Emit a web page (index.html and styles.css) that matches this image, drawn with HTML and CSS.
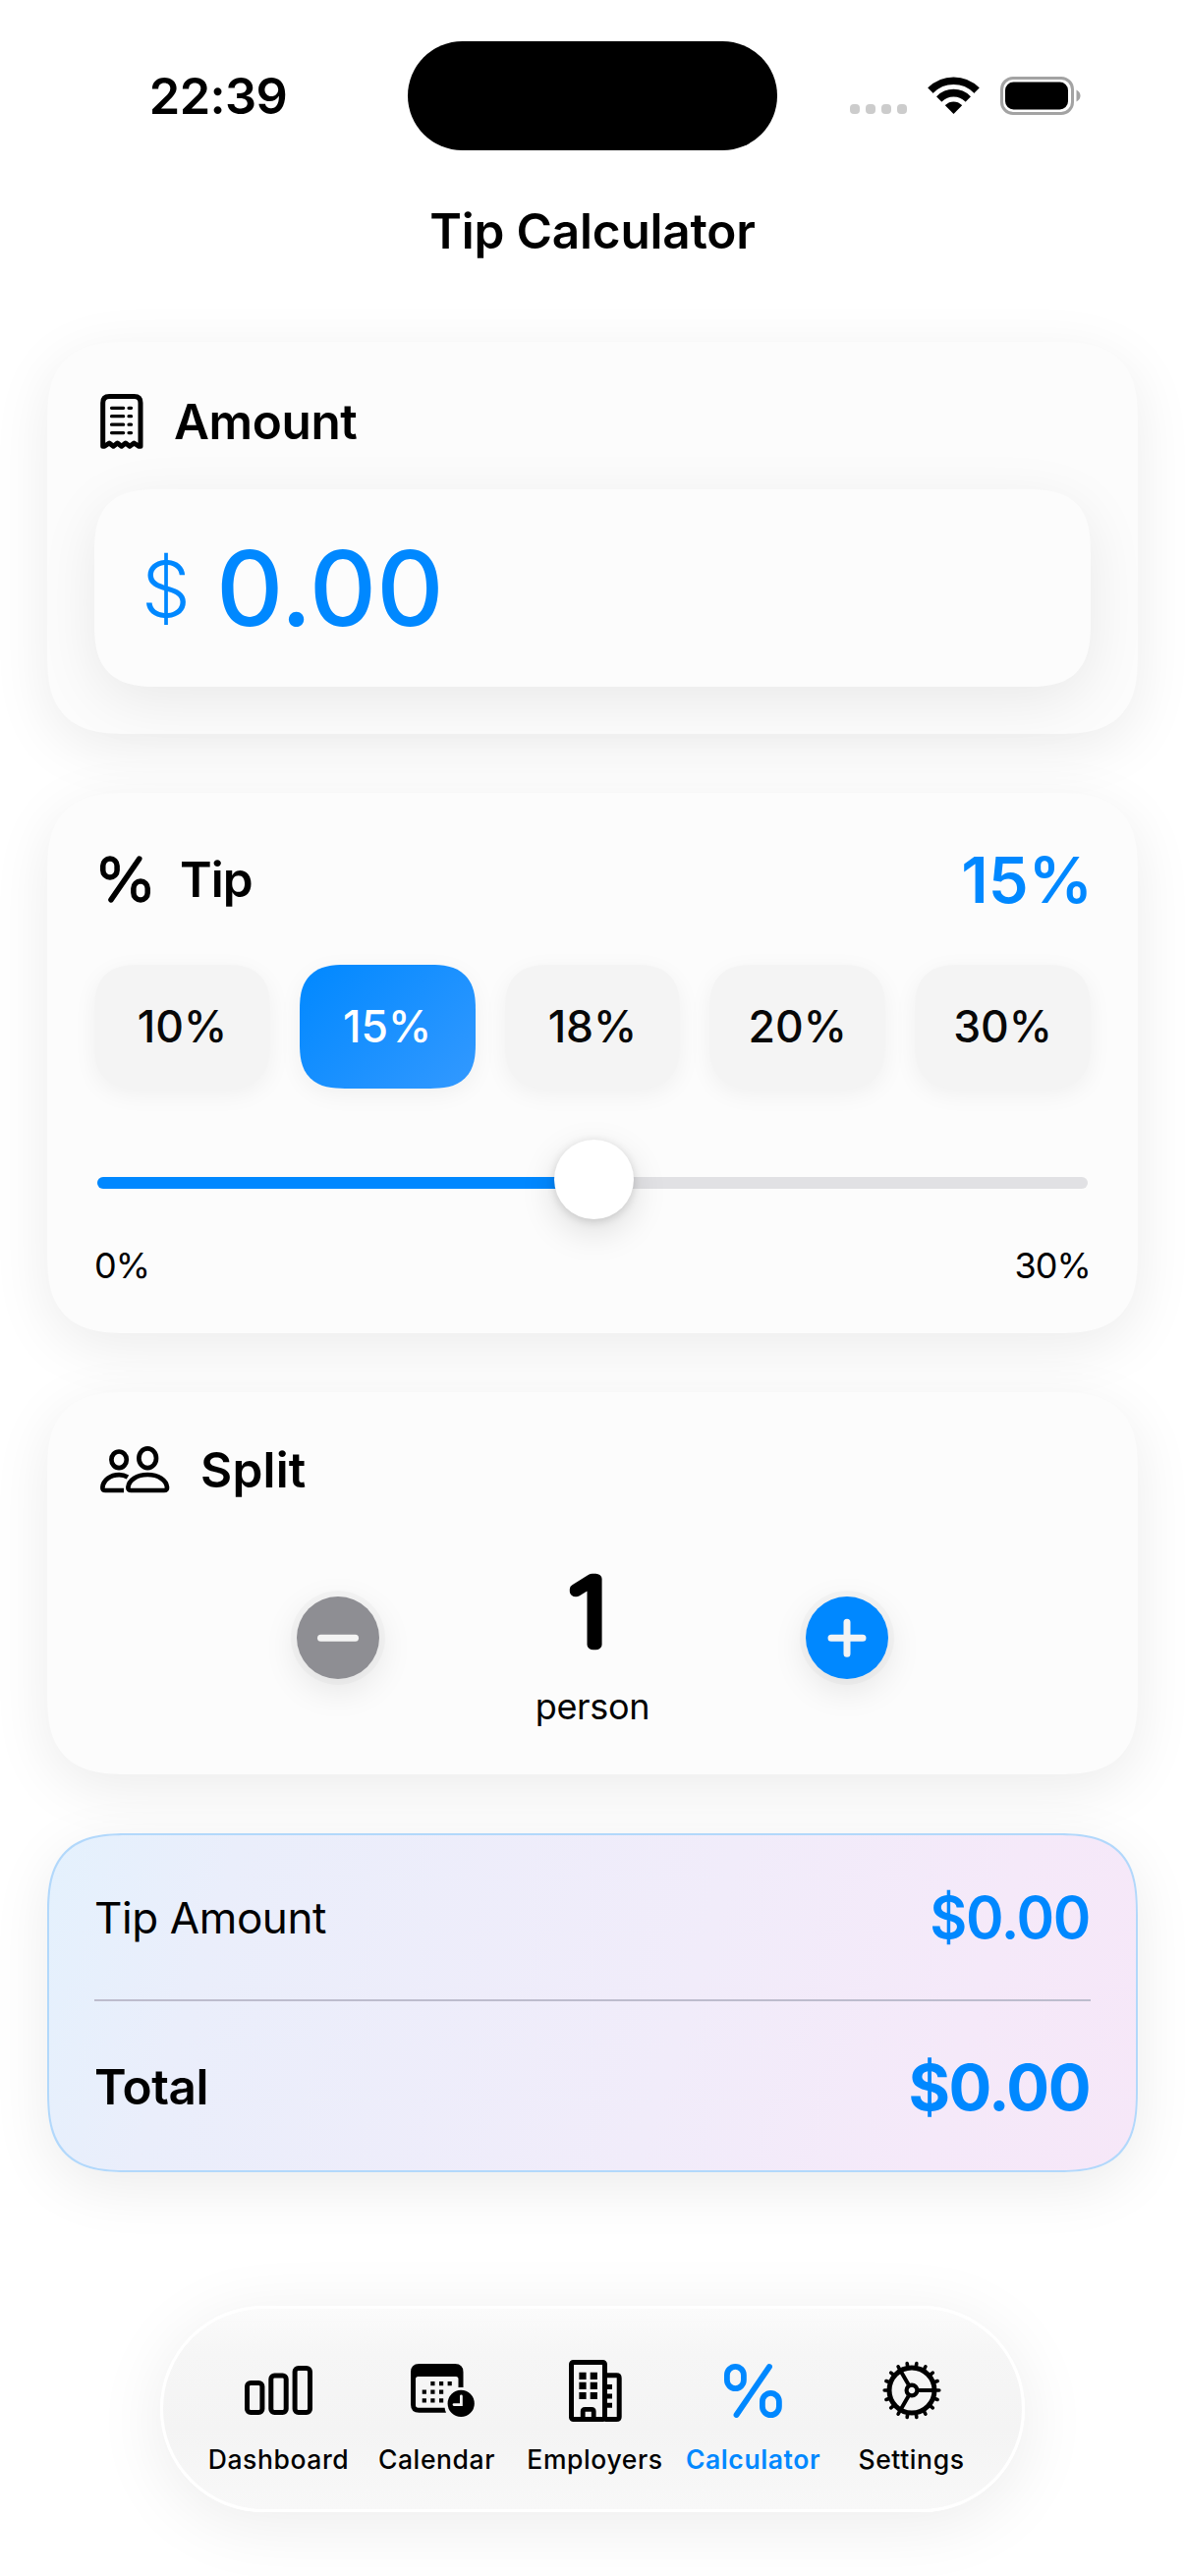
FILE: index.html
```html
<!DOCTYPE html>
<html lang="en">
<head>
<meta charset="utf-8">
<title>Tip Calculator</title>
<link rel="stylesheet" href="styles.css">
</head>
<body>
<div class="screen">
  <header class="status">
    <div class="time">22:39</div>
    <div class="island"></div>
    <div class="indicators">
      <span class="dots"><i></i><i></i><i></i><i></i></span>
      <svg class="wifi" width="51" height="38" viewBox="0 0 51 38">
        <defs><clipPath id="wedge"><path d="M25.5 38L-12 0V-10H63V0Z"/></clipPath></defs>
        <g clip-path="url(#wedge)" fill="none" stroke="#000">
          <circle cx="25.5" cy="37" r="32.8" stroke-width="7.6"/>
          <circle cx="25.5" cy="37" r="20.4" stroke-width="7.6"/>
          <circle cx="25.5" cy="37" r="5.8" stroke-width="11.6"/>
        </g>
      </svg>
      <svg class="battery" width="82" height="39" viewBox="0 0 82 39">
        <rect x="1.5" y="1.5" width="72" height="36" rx="11.5" fill="none" stroke="#a3a3a3" stroke-width="3"/>
        <rect x="5" y="5.5" width="64" height="28" rx="8.5"/>
        <path d="M77.5 13.5q4 2.2 4 6t-4 6z" fill="#a3a3a3"/>
      </svg>
    </div>
  </header>
  <h1 class="title">Tip Calculator</h1>

  <main class="cards">
    <section class="card card-amount">
      <div class="head">
        <svg class="receipt" width="44" height="56" viewBox="0 0 44 56" fill="none" stroke="#000" stroke-linecap="round" stroke-linejoin="round">
          <path stroke-width="5" d="M2.7 53.3V9Q2.7 2.6 9.2 2.6H34.6Q41 2.6 41 9V53.3H39.5L34.4 50L30 53.2L25.8 50L21.7 53.2L17.5 50L13.4 53.2L9.2 50L4.3 53.3Z"/>
          <path stroke-width="3.2" d="M11.5 14.3H23.7M29 14.3H31.6M11.5 22.7H23.7M29 22.7H31.6M11.5 31.2H23.7M29 31.2H31.6M11.5 39.6H23.7M29 39.6H31.6"/>
        </svg>
        <h2 class="label t-amount">Amount</h2>
      </div>
      <div class="field"><span class="currency">$</span><span class="value">0.00</span></div>
    </section>

    <section class="card card-tip">
      <div class="head">
        <svg class="pct" width="51" height="48" viewBox="0 0 59 55" fill="none" stroke="#000" stroke-width="6.4">
          <rect x="3.2" y="3.2" width="16.6" height="22" rx="8.3"/><rect x="39.2" y="29.8" width="16.6" height="22" rx="8.3"/>
          <path stroke-linecap="round" d="M46 3.3L12.7 51.7"/>
        </svg>
        <h2 class="label t-tip">Tip</h2>
        <span class="percent">15%</span>
      </div>
      <div class="chips">
        <button class="chip">10%</button><button class="chip on">15%</button><button class="chip">18%</button><button class="chip">20%</button><button class="chip">30%</button>
      </div>
      <div class="slider"><div class="track"><div class="fill"></div></div><div class="thumb"></div></div>
      <div class="range"><span>0%</span><span>30%</span></div>
    </section>

    <section class="card card-split">
      <div class="head">
        <svg class="people" width="71" height="48" viewBox="0 0 71 48" fill="none" stroke="#000" stroke-width="4.7" stroke-linecap="butt">
          <ellipse cx="19.1" cy="13.8" rx="7.7" ry="8.3"/><ellipse cx="48.2" cy="12.2" rx="8.8" ry="9.9"/>
          <path d="M31.4 45H65Q68.3 45 68 41.8C67.3 34.6 59.2 29 48.2 29S29.1 34.6 28.4 41.8Q28.1 45 31.4 45Z"/>
          <path d="M24 45H5.3Q2.1 45 2.4 42C3 35 10 29.2 19.3 29.2Q24 29.2 28 31.6"/>
        </svg>
        <h2 class="label t-split">Split</h2>
      </div>
      <div class="stepper">
        <button class="round minus"><svg width="84" height="84" viewBox="0 0 84 84"><path d="M24.5 42.3H59.5" stroke="#f4f4f4" stroke-width="7" stroke-linecap="round"/></svg></button>
        <div class="count">
          <svg class="number" width="60" height="90" viewBox="0 0 60 90"><text transform="translate(25.5 78.5) scale(1.2 1)" text-anchor="middle">1</text></svg>
          <span class="unit">person</span>
        </div>
        <button class="round plus"><svg width="84" height="84" viewBox="0 0 84 84"><path d="M26 42.3H58M42 26.3V58.3" stroke="#f4f4f4" stroke-width="7" stroke-linecap="round"/></svg></button>
      </div>
    </section>

    <section class="card card-total">
      <div class="row row-tip"><span class="row-name">Tip Amount</span><span class="sum">$0.00</span></div>
      <div class="row row-total"><span class="row-name">Total</span><span class="sum">$0.00</span></div>
    </section>
  </main>

  <nav class="tabs">
    <a class="tab"><span class="ico"><svg width="69" height="50" viewBox="0 0 69 50" fill="none" stroke="#000" stroke-width="5"><rect x="2.5" y="17.5" width="15.4" height="30" rx="3.6"/><rect x="26.8" y="10" width="15.4" height="37.5" rx="3.6"/><rect x="51.1" y="2.5" width="15.4" height="45" rx="3.6"/></svg></span><span class="name">Dashboard</span></a>
    <a class="tab"><span class="ico"><svg class="cal" width="65" height="54" viewBox="0 0 65 54">
      <path d="M0 8.5Q0 0 8.5 0H45Q53.5 0 53.5 8.5V24H48.5V15.5Q48.5 13 46 13H7.5Q5 13 5 15.5V42Q5 44.7 7.7 44.7H34.6Q34.8 47.5 36 49.7H8.5Q0 49.7 0 41.2Z"/>
      <path d="M20.3 18h4.2v4.2h-4.2zM29 18h4.2v4.2H29zM37.6 18h4.2v4.2h-4.2zM11.7 26.6h4.2v4.2h-4.2zM20.3 26.6h4.2v4.2h-4.2zM29 26.6h4.2v4.2H29zM11.7 35.2h4.2v4.2h-4.2zM20.3 35.2h4.2v4.2h-4.2zM29 35.2h4.2v4.2H29z"/>
      <circle cx="51.2" cy="40.4" r="13.6"/><path d="M51.4 33V41.6H44" fill="none" stroke="#f5f5f5" stroke-width="2.8" stroke-linecap="round"/></svg></span><span class="name">Calendar</span></a>
    <a class="tab"><span class="ico"><svg width="54" height="63" viewBox="0 0 54 63" fill="none" stroke="#000" stroke-width="5">
      <rect x="2.5" y="2.5" width="34" height="58" rx="2"/><path d="M36.5 15.8H48.5Q51.2 15.8 51.2 18.5V58Q51.2 60.5 48.5 60.5H36.5"/>
      <path d="M14.2 61V52.6Q14.2 50.4 16.4 50.4H23Q25.2 50.4 25.2 52.6V61" stroke-width="4.8"/>
      <path fill="#000" stroke="none" d="M10.4 12.7h7.2v7.2h-7.2zM21.7 12.7h7.2v7.2h-7.2zM10.4 22.8h7.2v7.2h-7.2zM21.7 22.8h7.2v7.2h-7.2zM10.4 32.9h7.2v7.2h-7.2zM21.7 32.9h7.2v7.2h-7.2zM39 25h5v5h-5zM39 34.4h5v5h-5zM39 43.8h5v5h-5z"/></svg></span><span class="name">Employers</span></a>
    <a class="tab active"><span class="ico"><svg width="59" height="55" viewBox="0 0 59 55" fill="none" stroke="#0088ff" stroke-width="5.8"><rect x="2.9" y="2.9" width="17" height="22.2" rx="8.5"/><rect x="38.9" y="29.9" width="17" height="22.2" rx="8.5"/><path stroke-linecap="round" d="M46 3L12.5 52"/></svg></span><span class="name">Calculator</span></a>
    <a class="tab"><span class="ico"><svg width="60" height="60" viewBox="-30 -30 60 60" fill="none" stroke="#000">
      <defs><path id="tooth" d="M25 0H27.8M-25 0H-27.8" stroke-width="3.6" stroke-linecap="round"/></defs>
      <use href="#tooth"/><use href="#tooth" transform="rotate(20)"/><use href="#tooth" transform="rotate(40)"/><use href="#tooth" transform="rotate(60)"/><use href="#tooth" transform="rotate(80)"/><use href="#tooth" transform="rotate(100)"/><use href="#tooth" transform="rotate(120)"/><use href="#tooth" transform="rotate(140)"/><use href="#tooth" transform="rotate(160)"/>
      <circle r="23" stroke-width="5"/><circle r="5.4" stroke-width="4.2"/>
      <path stroke-width="4" d="M7 0H22M-3.5 -6.1L-11 -19M-3.5 6.1L-11 19"/></svg></span><span class="name">Settings</span></a>
  </nav>
</div>
</body>
</html>
```
FILE: styles.css
```css
* { box-sizing: border-box; }
body {
  margin: 0;
  background: #fff;
  color: #000;
  font-family: Inter, "Liberation Sans", sans-serif;
}
h1, h2 { margin: 0; font-weight: 600; }
button { border: 0; padding: 0; font: inherit; color: inherit; }
svg { display: block; overflow: visible; flex: none; }
.screen {
  width: 1206px;
  height: 2622px;
  overflow: hidden;
  display: flex;
  flex-direction: column;
}

/* Status bar */
.status {
  height: 194px;
  display: grid;
  grid-template-columns: 415px 376px 415px;
  align-items: center;
}
.time { padding-left: 29px; text-align: center; font-size: 50.5px; font-weight: 600; letter-spacing: -0.6px; }
.island { height: 111px; border-radius: 56px; background: #000; }
.indicators { display: flex; align-items: center; padding-left: 74px; }
.dots { display: flex; gap: 6px; padding-top: 27px; margin-right: 22px; }
.dots i { width: 10px; height: 10px; border-radius: 4px; background: #ccc; }
.wifi { margin-right: 22px; }

.title { height: 82px; line-height: 82px; text-align: center; font-size: 49.5px; letter-spacing: -0.2px; }

/* Cards */
.cards { padding: 72px 48px 0; display: flex; flex-direction: column; gap: 60px; }
.card {
  border-radius: 64px;
  background: #fcfcfc;
  box-shadow: 0 15px 60px rgba(0, 0, 0, .08);
  padding: 48px;
  display: flex;
  flex-direction: column;
}
.head { display: flex; align-items: center; flex: none; }
.label { font-size: 49.5px; line-height: 60px; }

.card-amount { height: 399px; }
.card-amount .head { height: 66px; padding-left: 6px; }
.t-amount { margin-left: 31px; letter-spacing: -0.4px; }
.field {
  height: 201px;
  margin-top: 36px;
  border-radius: 52px;
  background: #fcfcfc;
  box-shadow: 0 15px 60px rgba(0, 0, 0, .08);
  display: flex;
  align-items: center;
  color: #0088ff;
}
.currency { padding-left: 48px; font-size: 79px; font-weight: 300; }
.value { margin-left: 26px; font-size: 106px; font-weight: 500; }

.card-tip { height: 550px; }
.card-tip .head { height: 80px; padding-left: 6px; }
.t-tip { margin-left: 30px; letter-spacing: -1px; }
.percent { margin-left: auto; margin-right: -2px; color: #0088ff; font-size: 65px; font-weight: 600; }
.chips { display: grid; grid-template-columns: repeat(5, 1fr); gap: 30px; height: 126px; margin-top: 47px; flex: none; }
.chip {
  border-radius: 38px;
  background: #f4f4f4;
  box-shadow: 0 6px 24px rgba(0, 0, 0, .05);
  font-size: 44.5px;
  font-weight: 500;
  color: #080808;
}
.chip.on { background: linear-gradient(135deg, #0088ff, #3399ff); color: #fff; }
.slider { height: 81px; margin: 52px 3px 0; display: grid; align-items: center; flex: none; }
.track, .thumb { grid-area: 1 / 1; }
.track { height: 12px; margin-top: 7px; border-radius: 6px; background: #e1e1e4; }
.fill { width: 50%; height: 12px; border-radius: 6px 0 0 6px; background: #0088ff; }
.thumb {
  justify-self: center;
  margin-left: 2px;
  width: 81px;
  height: 81px;
  border-radius: 50%;
  background: #fff;
  box-shadow: 0 12px 36px rgba(0, 0, 0, .13), 0 2px 10px rgba(0, 0, 0, .14);
}
.range { display: flex; justify-content: space-between; margin-top: 25px; font-size: 36px; line-height: 44px; letter-spacing: -0.9px; }

.card-split { height: 389px; }
.card-split .head { height: 62px; padding-left: 6px; }
.t-split { margin-left: 31px; letter-spacing: .2px; }
.stepper { display: flex; justify-content: space-between; padding: 0 206px; height: 231px; }
.round { width: 84px; height: 84px; margin-top: 98px; border-radius: 50%; box-shadow: 0 0 0 6px rgba(0, 0, 0, .022), 0 10px 36px rgba(0, 0, 0, .1); }
.minus { background: #8e8e93; }
.plus { background: #0088ff; }
.count { width: 240px; display: flex; flex-direction: column; align-items: center; }
.number { margin-top: 68px; }
.number text { font-size: 92px; font-weight: 100; stroke: #000; stroke-width: 10.5px; stroke-linejoin: round; }
.unit { margin-top: 30px; font-size: 36px; line-height: 44px; letter-spacing: -0.3px; }

.card-total {
  height: 345px;
  padding: 0 46px;
  border: 2px solid #b2d8fb;
  background: linear-gradient(108deg, #e4f1fd 0%, #eaeefb 16%, #f1ecfa 58%, #f5e9f9 82%, #f6e7f8 100%);
}
.row { display: flex; align-items: center; justify-content: space-between; flex: none; }
.row-tip { height: 169px; border-bottom: 2px solid #bdbccd; }
.row-total { height: 174px; }
.row-tip .row-name { font-size: 44px; letter-spacing: -0.4px; }
.row-total .row-name { font-size: 49.5px; font-weight: 600; letter-spacing: -0.4px; }
.sum { color: #0088ff; font-weight: 600; margin-right: 1px; }
.row-tip .sum { font-size: 58.5px; letter-spacing: -1.3px; }
.row-total .sum { font-size: 65px; font-weight: 650; letter-spacing: -1.5px; }

/* Tab bar */
.tabs {
  width: 880px;
  height: 210px;
  margin: 136px auto 0;
  padding: 0 36px 0 37px;
  border-radius: 105px;
  border: 3px solid #fff;
  background: linear-gradient(#fbfbfb, #f6f6f6 22%, #f4f4f4 60%, #f8f8f8);
  box-shadow: 0 12px 70px rgba(0, 0, 0, .08);
  display: flex;
  flex: none;
}
.tab { width: 161px; flex: none; display: flex; flex-direction: column; align-items: center; }
.ico { height: 90px; margin-top: 38px; display: flex; align-items: center; }
.cal { margin-left: 12px; }
.name { font-size: 26.5px; line-height: 34px; margin-top: 8px; font-weight: 500; letter-spacing: .6px; white-space: nowrap; }
.active .name { color: #0088ff; font-weight: 600; }

/* Continuous corners where the engine can draw them */
@supports (corner-shape: superellipse(1.5)) {
  .card { border-radius: 84px; corner-shape: superellipse(1.5); }
  .field { border-radius: 67px; corner-shape: superellipse(1.5); }
  .chip { border-radius: 46px; corner-shape: superellipse(1.4); }
}
```
